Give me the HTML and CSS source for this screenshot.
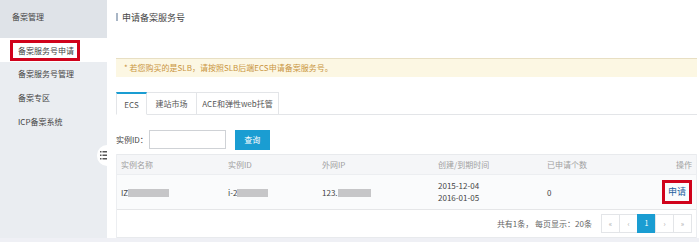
FILE: index.html
```html
<!DOCTYPE html>
<html lang="zh-CN">
<head>
    <meta charset="UTF-8">
    <title>申请备案服务号</title>
    <link rel="stylesheet" href="styles.css">
</head>
<body>
    <div class="layout">
        <aside class="sidebar">
            <div class="side-title">备案管理</div>
            <ul class="side-menu">
                <li class="active"><span class="mark">备案服务号申请</span></li>
                <li>备案服务号管理</li>
                <li>备案专区</li>
                <li>ICP备案系统</li>
            </ul>
            <div class="side-toggle">
                <svg width="7" height="9" viewBox="0 0 7 9">
                    <rect x="0" y="0" width="1.5" height="1.5" fill="#555"/>
                    <rect x="2.5" y="0" width="4.5" height="1.5" fill="#555"/>
                    <rect x="0" y="3.5" width="1.5" height="1.5" fill="#555"/>
                    <rect x="2.5" y="3.5" width="4.5" height="1.5" fill="#555"/>
                    <rect x="0" y="7" width="1.5" height="1.5" fill="#555"/>
                    <rect x="2.5" y="7" width="4.5" height="1.5" fill="#555"/>
                </svg>
            </div>
        </aside>

        <main class="content">
            <h2 class="page-title"><span class="bar"></span>申请备案服务号</h2>

            <div class="alert">* 若您购买的是SLB，请按照SLB后端ECS申请备案服务号。</div>

            <div class="tabs">
                <div class="tab active">ECS</div>
                <div class="tab">建站市场</div>
                <div class="tab wide">ACE和弹性web托管</div>
            </div>

            <form class="search">
                <label for="instId">实例ID：</label>
                <input type="text" id="instId">
                <button type="button" class="search-btn">查询</button>
            </form>

            <div class="table">
                <div class="row head">
                    <div>实例名称</div>
                    <div>实例ID</div>
                    <div>外网IP</div>
                    <div>创建/到期时间</div>
                    <div>已申请个数</div>
                    <div class="op">操作</div>
                </div>
                <div class="row body">
                    <div>IZ<span class="blur" style="width:41px"></span></div>
                    <div>i-2<span class="blur" style="width:31px"></span></div>
                    <div>123.<span class="blur" style="width:33px"></span></div>
                    <div class="dates">2015-12-04<br>2016-01-05</div>
                    <div>0</div>
                    <div class="op"><a href="#" class="apply">申请</a></div>
                </div>
                <div class="pager">
                    <span class="total">共有1条， 每页显示：20条</span>
                    <div class="pages">
                        <span>«</span>
                        <span>‹</span>
                        <span class="current">1</span>
                        <span>›</span>
                        <span>»</span>
                    </div>
                </div>
            </div>
        </main>
    </div>
</body>
</html>
```

FILE: styles.css
```css
:root {
    --primary-color: #1a9dd2;
    --text-color: #444;
    --muted: #a0a0a0;
    --border: #e3e5e8;
    --side-bg: #eaedf1;
    --mark-red: #d0021b;
    --font-family: "Noto Sans CJK SC", "Noto Sans", sans-serif;
}

* {
    box-sizing: border-box;
    margin: 0;
    padding: 0;
}

body {
    font-family: var(--font-family);
    background-color: #eff0f5;
    color: var(--text-color);
    font-size: 8px;
}

.layout {
    display: flex;
    height: 238px;
}

/* menu de gauche */
.sidebar {
    position: relative;
    width: 107px;
    flex-shrink: 0;
    background-color: var(--side-bg);
}

.side-title {
    height: 38px;
    line-height: 34px;
    padding-left: 12px;
    background-color: #dfe3e8;
}

.side-menu {
    list-style: none;
}

.side-menu li {
    height: 24px;
    line-height: 24px;
    padding-left: 18px;
}

.side-menu li.active {
    background-color: #fff;
    padding-left: 10px;
}

.mark {
    display: inline-block;
    line-height: 13px;
    padding: 1px 3px 1px 5px;
    border: 3px solid var(--mark-red);
    vertical-align: middle;
}

.side-toggle {
    position: absolute;
    top: 145px;
    right: -2px;
    width: 12px;
    height: 21px;
    background-color: #fff;
    border-radius: 10px 0 0 10px;
    display: flex;
    align-items: center;
    justify-content: flex-end;
    padding-right: 2px;
}

.side-toggle svg {
    display: block;
}

/* contenu */
.content {
    flex: 1;
    background-color: #fff;
    padding: 0 2px 0 9px;
}

.page-title {
    display: flex;
    align-items: center;
    height: 34px;
    font-size: 9px;
    font-weight: normal;
}

.page-title .bar {
    width: 2px;
    height: 8px;
    background-color: #a9b6c6;
    margin-right: 4px;
}

.alert {
    margin-top: 24px;
    height: 19px;
    line-height: 18px;
    padding-left: 8px;
    background-color: #fcf7e3;
    border-top: 1px solid #e8dfc3;
    color: #c9953f;
}

.tabs {
    display: flex;
    margin-top: 15px;
    border-bottom: 1px solid var(--border);
}

.tab {
    height: 23px;
    line-height: 22px;
    padding: 0;
    border: 1px solid var(--border);
    border-left: none;
    margin-bottom: -1px;
    color: #555;
    text-align: center;
}

.tab:first-child {
    border-left: 1px solid var(--border);
}

.tab.active {
    width: 31px;
    border-top: 2px solid var(--primary-color);
    border-bottom-color: #fff;
    line-height: 21px;
}

.tab:nth-child(2) {
    width: 50px;
}

.tab.wide {
    width: 82px;
}

.search {
    display: flex;
    align-items: center;
    margin-top: 15px;
    height: 19px;
}

.search label {
    flex-shrink: 0;
    white-space: nowrap;
    margin-right: 1px;
}

.search input {
    width: 77px;
    height: 19px;
    border: 1px solid #cfd2d6;
    outline: none;
}

.search-btn {
    margin-left: 9px;
    width: 35px;
    height: 20px;
    border: none;
    background-color: var(--primary-color);
    color: #fff;
    font-family: var(--font-family);
    font-size: 8px;
}

.table {
    margin-top: 5px;
    border-left: 1px solid #eceef1;
    border-right: 1px solid #eceef1;
}

.row {
    display: grid;
    grid-template-columns: 107px 94px 116px 109px 1fr 60px;
    align-items: center;
    padding-left: 4px;
}

.row.head {
    height: 20px;
    background-color: #f5f6f8;
    border-top: 1px solid #e8eaed;
    color: var(--muted);
}

.row.body {
    height: 36px;
    background-color: #fafbfc;
    border-top: 1px solid #eceef1;
    border-bottom: 1px solid #e5e6e8;
}

.op {
    text-align: right;
    padding-right: 4px;
}

.blur {
    display: inline-block;
    height: 8px;
    background-color: #c6c6c8;
    vertical-align: -1px;
}

.dates {
    line-height: 12px;
}

.apply {
    display: inline-block;
    padding: 3px 3px;
    border: 3px solid var(--mark-red);
    color: #1d5c9c;
    text-decoration: none;
    font-size: 9px;
    line-height: 12px;
}

.pager {
    display: flex;
    align-items: center;
    justify-content: flex-end;
    height: 28px;
    padding-right: 4px;
    border-bottom: 1px solid #e8eaed;
}

.total {
    color: #666;
    margin-right: 10px;
}

.pages {
    display: flex;
}

.pages span {
    width: 19px;
    height: 19px;
    line-height: 17px;
    text-align: center;
    border: 1px solid var(--border);
    margin-left: -1px;
    color: #aaa;
    font-size: 7px;
}

.pages span.current {
    background-color: var(--primary-color);
    border-color: var(--primary-color);
    color: #fff;
}
```
